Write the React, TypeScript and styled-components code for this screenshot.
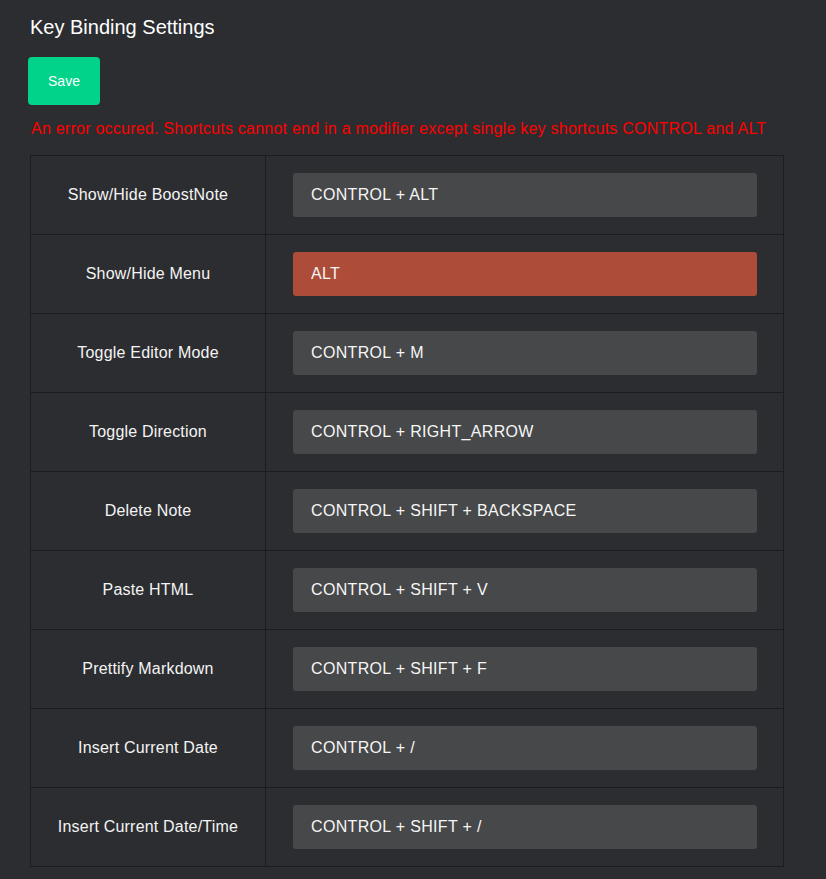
import * as React from 'react';
import styled, { createGlobalStyle } from 'styled-components';

interface Binding {
  label: string;
  keys: string;
  invalid?: boolean;
}

const bindings: Binding[] = [
  { label: 'Show/Hide BoostNote', keys: 'CONTROL + ALT' },
  { label: 'Show/Hide Menu', keys: 'ALT', invalid: true },
  { label: 'Toggle Editor Mode', keys: 'CONTROL + M' },
  { label: 'Toggle Direction', keys: 'CONTROL + RIGHT_ARROW' },
  { label: 'Delete Note', keys: 'CONTROL + SHIFT + BACKSPACE' },
  { label: 'Paste HTML', keys: 'CONTROL + SHIFT + V' },
  { label: 'Prettify Markdown', keys: 'CONTROL + SHIFT + F' },
  { label: 'Insert Current Date', keys: 'CONTROL + /' },
  { label: 'Insert Current Date/Time', keys: 'CONTROL + SHIFT + /' },
];

export default function App() {
  return (
    <>
      <GlobalStyle />
      <Page>
        <Title>Key Binding Settings</Title>
        <SaveButton type="button">Save</SaveButton>
        <ErrorText>
          An error occured. Shortcuts cannot end in a modifier except single key shortcuts CONTROL and ALT
        </ErrorText>
        <Table>
          <tbody>
            {bindings.map((b) => (
              <Row key={b.label}>
                <LabelCell>{b.label}</LabelCell>
                <InputCell>
                  <KeyInput $invalid={b.invalid} value={b.keys} readOnly />
                </InputCell>
              </Row>
            ))}
          </tbody>
        </Table>
      </Page>
    </>
  );
}

const GlobalStyle = createGlobalStyle`
  html, body {
    margin: 0;
    background: #2c2d30;
  }
  body {
    font-family: 'Liberation Sans', Arial, sans-serif;
    color: #f2f2f2;
  }
`;

const Page = styled.div`
  min-height: 879px;
  box-sizing: border-box;
  padding: 16px 0 0 30px;
  background: #2c2d30;
`;

const Title = styled.h1`
  margin: 0 0 18px 0;
  font-size: 20px;
  font-weight: normal;
  line-height: 23px;
  color: #ffffff;
`;

const SaveButton = styled.button`
  display: block;
  margin-left: -2px;
  width: 72px;
  height: 48px;
  border: none;
  border-radius: 4px;
  background: #02d38b;
  color: #ffffff;
  font-family: 'Liberation Sans', Arial, sans-serif;
  font-size: 14px;
  cursor: pointer;
`;

const ErrorText = styled.p`
  margin: 15px 0 17px 1px;
  font-size: 16px;
  line-height: 18px;
  letter-spacing: 0.24px;
  color: #ff0000;
`;

const Table = styled.table`
  border-collapse: collapse;
  width: 754px;
`;

const Row = styled.tr`
  height: 79px;
`;

const LabelCell = styled.td`
  width: 234px;
  padding: 0;
  border: 1px solid #1c1d1f;
  text-align: center;
  font-size: 16px;
  letter-spacing: 0.2px;
  color: #f4f4f4;
`;

const InputCell = styled.td`
  padding: 0 26px 0 27px;
  border: 1px solid #1c1d1f;
`;

const KeyInput = styled.input<{ $invalid?: boolean }>`
  display: block;
  box-sizing: border-box;
  width: 464px;
  height: 44px;
  padding: 0 18px;
  border: none;
  border-radius: 3px;
  outline: none;
  background: ${(p) => (p.$invalid ? '#ad4c39' : '#474849')};
  color: #f6f6f6;
  font-family: 'Liberation Sans', Arial, sans-serif;
  font-size: 16px;
  letter-spacing: 0.33px;
`;
